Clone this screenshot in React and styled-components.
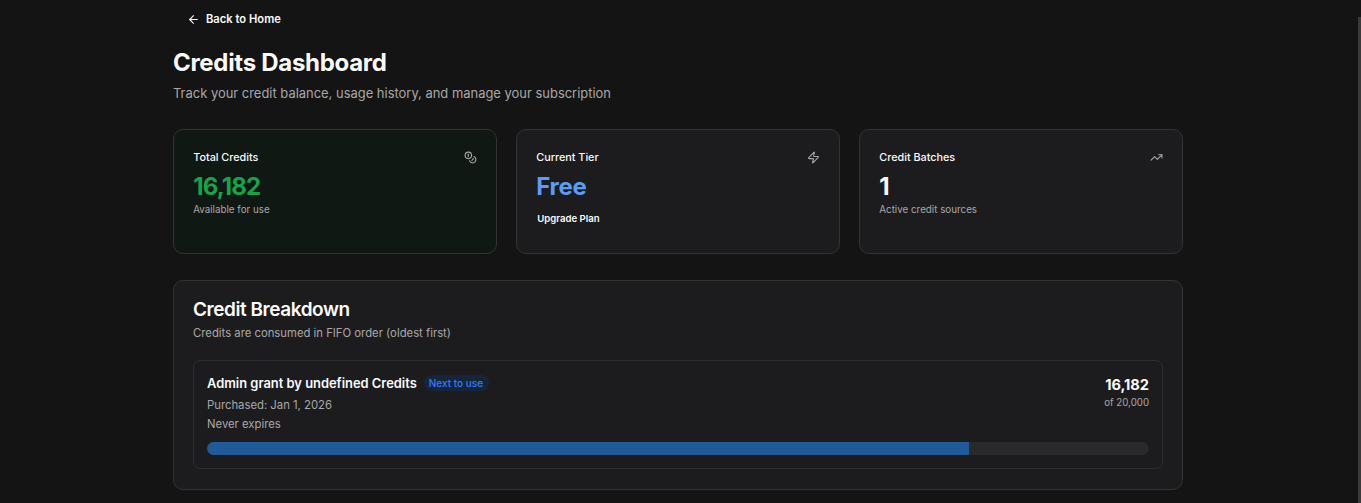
import React from "react";
import styled, { createGlobalStyle } from "styled-components";
import { ArrowLeft, Coins, Zap, TrendingUp } from "lucide-react";

const Global = createGlobalStyle`
  html, body { margin: 0; padding: 0; height: 503px; overflow: hidden; background: #141414; }
  body { font-family: Inter, "Liberation Sans", sans-serif; color: #fafafa; }
`;

const Page = styled.main`
  width: 1010px;
  margin-left: 173px;
  display: flex;
  flex-direction: column;
`;

const ScrollThumb = styled.div`
  position: fixed;
  top: 17px;
  right: 0;
  bottom: 0;
  width: 3px;
  background: #3a3a3a;
`;

const BackLink = styled.a`
  display: flex;
  align-items: center;
  gap: 6px;
  height: 38px;
  padding-left: 14px;
  font-size: 11.2px;
  font-weight: 600;
  color: #fafafa;
  svg { width: 13px; height: 13px; }
`;

const Title = styled.h1`
  margin: 9px 0 0;
  font-size: 24px;
  line-height: 32px;
  font-weight: 700;
  letter-spacing: -0.3px;
`;

const Subtitle = styled.p`
  margin: 5px 0 0;
  font-size: 12.95px;
  line-height: 18px;
  color: #a8a8a8;
`;

const StatGrid = styled.section`
  display: grid;
  grid-template-columns: repeat(3, 1fr);
  gap: 19.2px;
  margin-top: 27px;
`;

const StatCard = styled.article`
  box-sizing: border-box;
  height: 125px;
  padding: 20px 19px 20px 19.2px;
  border: 1px solid #333335;
  border-radius: 10px;
  background: ${(p) => p.$bg || "#1c1c1f"};
`;

const StatHead = styled.div`
  display: flex;
  justify-content: space-between;
  align-items: center;
  height: 15px;
  font-size: 10.8px;
  font-weight: 500;
  svg { width: 13px; height: 13px; color: #a8a8a8; }
`;

const StatValue = styled.div`
  margin-top: 6px;
  font-size: 24px;
  line-height: 32px;
  font-weight: 700;
  letter-spacing: ${(p) => p.$track}px;
  color: ${(p) => p.$color};
`;

const StatNote = styled.div`
  font-size: 9.8px;
  line-height: 14px;
  color: #a8a8a8;
`;

const UpgradeLink = styled.a`
  display: block;
  margin: 9px 0 0 1px;
  font-size: 9.6px;
  line-height: 14px;
  font-weight: 600;
  color: #fafafa;
`;

const Panel = styled.section`
  box-sizing: border-box;
  height: 210px;
  margin-top: 26px;
  padding: 20px 19px;
  border: 1px solid #333335;
  border-radius: 10px;
  background: #1c1c1f;
`;

const PanelTitle = styled.h2`
  margin: 0;
  font-size: 19px;
  line-height: 18px;
  font-weight: 600;
  letter-spacing: -0.45px;
`;

const PanelNote = styled.p`
  margin: 6px 0 0;
  font-size: 11.3px;
  line-height: 16px;
  color: #a8a8a8;
`;

const Batch = styled.div`
  box-sizing: border-box;
  height: 109px;
  margin-top: 19px;
  padding: 13px;
  border: 1px solid #2d2d30;
  border-radius: 7px;
`;

const BatchTop = styled.div`
  display: flex;
  justify-content: space-between;
  height: 68px;
`;

const BatchTitleRow = styled.div`
  display: flex;
  align-items: center;
  gap: 7px;
  height: 18px;
  font-size: 12.9px;
  font-weight: 600;
`;

const Badge = styled.span`
  padding: 0 6px 0 5px;
  height: 16px;
  display: inline-flex;
  align-items: center;
  border-radius: 8px;
  background: #17253a;
  color: #2b7fff;
  font-size: 10px;
  font-weight: 500;
`;

const BatchMeta = styled.div`
  margin-top: ${(p) => p.$gap}px;
  font-size: 11.3px;
  line-height: 16px;
  color: #a8a8a8;
`;

const Amount = styled.div`
  text-align: right;
  padding-top: 1px;
`;

const AmountValue = styled.div`
  font-size: 14.6px;
  line-height: 20px;
  font-weight: 700;
`;

const AmountNote = styled.div`
  margin-top: 1px;
  font-size: 9.7px;
  line-height: 13px;
  color: #a8a8a8;
`;

const Track = styled.div`
  height: 13px;
  border-radius: 7px;
  background: #2a2a2c;
  overflow: hidden;
`;

const Fill = styled.div`
  height: 100%;
  background: #215a98;
`;

export default function App() {
  const used = (16182 / 20000) * 100;
  return (
    <>
      <Global />
      <Page>
        <BackLink>
          <ArrowLeft />
          Back to Home
        </BackLink>
        <Title>Credits Dashboard</Title>
        <Subtitle>Track your credit balance, usage history, and manage your subscription</Subtitle>
        <StatGrid>
          <StatCard $bg="#101813">
            <StatHead>Total Credits<Coins /></StatHead>
            <StatValue $color="#16a34a" $track={-0.85}>16,182</StatValue>
            <StatNote>Available for use</StatNote>
          </StatCard>
          <StatCard>
            <StatHead>Current Tier<Zap /></StatHead>
            <StatValue $color="#5b9cf5" $track={-0.25}>Free</StatValue>
            <UpgradeLink>Upgrade Plan</UpgradeLink>
          </StatCard>
          <StatCard>
            <StatHead>Credit Batches<TrendingUp /></StatHead>
            <StatValue $color="#fafafa" $track={-0.5}>1</StatValue>
            <StatNote>Active credit sources</StatNote>
          </StatCard>
        </StatGrid>
        <Panel>
          <PanelTitle>Credit Breakdown</PanelTitle>
          <PanelNote>Credits are consumed in FIFO order (oldest first)</PanelNote>
          <Batch>
            <BatchTop>
              <div>
                <BatchTitleRow>Admin grant by undefined Credits<Badge>Next to use</Badge></BatchTitleRow>
                <BatchMeta $gap={5}>Purchased: Jan 1, 2026</BatchMeta>
                <BatchMeta $gap={3}>Never expires</BatchMeta>
              </div>
              <Amount>
                <AmountValue>16,182</AmountValue>
                <AmountNote>of 20,000</AmountNote>
              </Amount>
            </BatchTop>
            <Track><Fill style={{ width: `${used}%` }} /></Track>
          </Batch>
        </Panel>
      </Page>
      <ScrollThumb />
    </>
  );
}
